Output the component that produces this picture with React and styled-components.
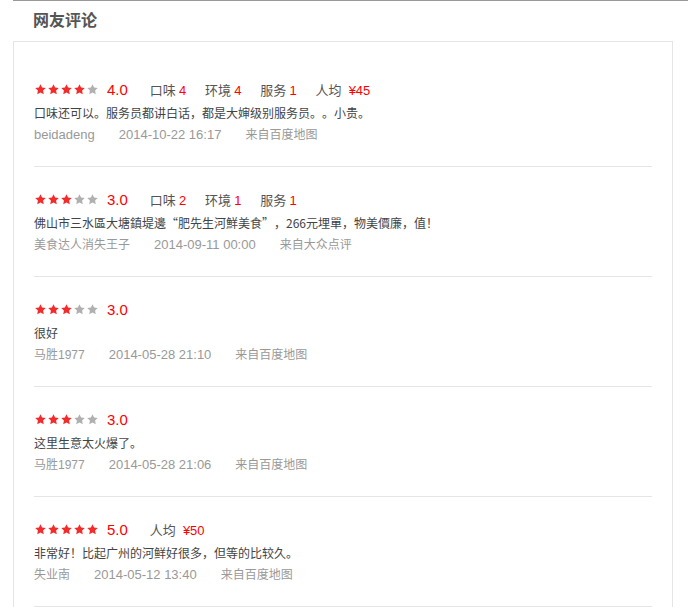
import React from "react";
import styled, { createGlobalStyle } from "styled-components";

const Global = createGlobalStyle`
  html, body { margin: 0; padding: 0; background: #fff; }
  body {
    font-family: "Liberation Sans", "Noto Sans CJK SC", sans-serif;
    text-spacing-trim: space-all;
  }
`;

const Page = styled.div`
  padding-left: 13px;
`;

const Section = styled.section`
  border-top: 1px solid #999;
`;

const Title = styled.h2`
  margin: 0;
  padding-left: 20px;
  height: 40px;
  line-height: 40px;
  font-size: 16px;
  font-weight: bold;
  color: #555;
`;

const Panel = styled.div`
  box-sizing: border-box;
  width: 660px;
  border: 1px solid #e5e5e5;
  border-bottom: none;
  padding: 15px 20px 0;
`;

const Item = styled.div`
  padding: 20px 0 20px;
  border-bottom: 1px solid #e5e5e5;
`;

const TopRow = styled.div`
  display: flex;
  align-items: center;
  height: 25px;
`;

const Stars = styled.span`
  display: inline-flex;
  width: 65px;
`;

const Rating = styled.span`
  margin-left: 8px;
  margin-right: 22px;
  font-size: 15px;
  color: #f00;
`;

const Score = styled.span`
  margin-right: 19px;
  font-size: 13px;
  color: #555;
  white-space: nowrap;
`;

const Value = styled.span`
  margin-left: ${(p) => (p.$price ? "7px" : "3px")};
  font-size: 13px;
  color: #f00;
`;

const Comment = styled.div`
  height: 22px;
  line-height: 22px;
  font-family: "Noto Sans CJK SC", "Liberation Sans", sans-serif;
  font-size: 12px;
  color: #444;
  white-space: nowrap;
`;

const Meta = styled.div`
  display: flex;
  height: 22px;
  line-height: 22px;
  font-size: 12px;
  color: #999;
  white-space: nowrap;
`;

const MetaItem = styled.span`
  margin-right: 24px;
  font-size: ${(p) => (p.$wide ? "13px" : "12px")};
`;

const Star = ({ on }) => (
  <svg width="13" height="13" viewBox="0 0 24 24">
    <path
      d="M12 2.2l2.94 6.1 6.76.9-4.92 4.7 1.22 6.68L12 17.35 5.99 20.58l1.22-6.68L2.3 9.2l6.76-.9z"
      fill={on ? "#f32b2b" : "#b0b0b0"}
    />
  </svg>
);

const reviews = [
  {
    stars: 4,
    rating: "4.0",
    scores: [["口味", "4"], ["环境", "4"], ["服务", "1"]],
    price: "¥45",
    text: "口味还可以。服务员都讲白话，都是大婶级别服务员。。小贵。",
    user: "beidadeng",
    latinUser: true,
    date: "2014-10-22 16:17",
    source: "来自百度地图",
  },
  {
    stars: 3,
    rating: "3.0",
    scores: [["口味", "2"], ["环境", "1"], ["服务", "1"]],
    text: "佛山市三水區大塘鎮堤邊“肥先生河鮮美食”，266元埋單，物美價廉，值！",
    user: "美食达人消失王子",
    date: "2014-09-11 00:00",
    source: "来自大众点评",
  },
  {
    stars: 3,
    rating: "3.0",
    scores: [],
    text: "很好",
    user: "马胜1977",
    date: "2014-05-28 21:10",
    source: "来自百度地图",
  },
  {
    stars: 3,
    rating: "3.0",
    scores: [],
    text: "这里生意太火爆了。",
    user: "马胜1977",
    date: "2014-05-28 21:06",
    source: "来自百度地图",
  },
  {
    stars: 5,
    rating: "5.0",
    scores: [],
    price: "¥50",
    text: "非常好！比起广州的河鲜好很多，但等的比较久。",
    user: "失业南",
    date: "2014-05-12 13:40",
    source: "来自百度地图",
  },
];

export default function App() {
  return (
    <Page>
      <Global />
      <Section>
        <Title>网友评论</Title>
        <Panel>
          {reviews.map((r, i) => (
            <Item key={i}>
              <TopRow>
                <Stars>
                  {[0, 1, 2, 3, 4].map((s) => (
                    <Star key={s} on={s < r.stars} />
                  ))}
                </Stars>
                <Rating>{r.rating}</Rating>
                {r.scores.map(([k, v]) => (
                  <Score key={k}>
                    {k}
                    <Value>{v}</Value>
                  </Score>
                ))}
                {r.price && (
                  <Score>
                    人均
                    <Value $price>{r.price}</Value>
                  </Score>
                )}
              </TopRow>
              <Comment>{r.text}</Comment>
              <Meta>
                <MetaItem $wide={r.latinUser}>{r.user}</MetaItem>
                <MetaItem $wide>{r.date}</MetaItem>
                <MetaItem>{r.source}</MetaItem>
              </Meta>
            </Item>
          ))}
        </Panel>
      </Section>
    </Page>
  );
}
